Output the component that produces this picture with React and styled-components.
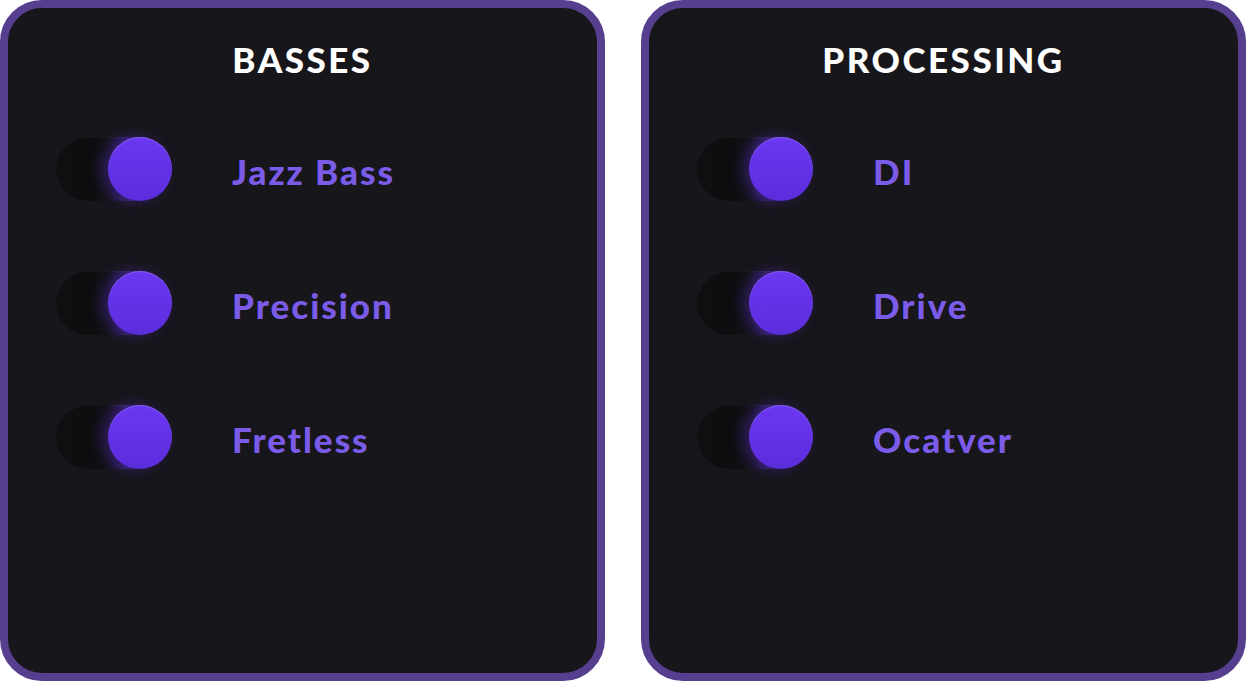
import styled, {createGlobalStyle} from 'styled-components'
import {useState} from "react";

const GlobalStyle = createGlobalStyle`
  body {
    margin: 0;
    background: #ffffff;
    font-family: "Lato", "Noto Sans", sans-serif;
  }
`

const sections = [
    {title: 'BASSES', items: ['Jazz Bass', 'Precision', 'Fretless']},
    {title: 'PROCESSING', items: ['DI', 'Drive', 'Ocatver']},
]

const Toggle = ({on, onClick}) => (
    <Track onClick={onClick} $on={on}>
        <Knob $on={on}/>
    </Track>
)

const Panel = ({title, items}) => {
    const [state, setState] = useState(items.map(() => true))

    const flip = index => setState(s => s.map((v, i) => i === index ? !v : v))

    return (
        <Card>
            <Title>{title}</Title>
            <List>
                {
                    items.map((item, index) =>
                        <Row key={item}>
                            <Toggle on={state[index]} onClick={() => flip(index)}/>
                            <Label>{item}</Label>
                        </Row>
                    )
                }
            </List>
        </Card>
    )
}

const App = () => (
    <>
        <GlobalStyle/>
        <Page>
            {sections.map(s => <Panel key={s.title} title={s.title} items={s.items}/>)}
        </Page>
    </>
)

export default App;


const Page = styled.div`
  display: flex;
  gap: 36px;
  width: 1246px;
`

const Card = styled.div`
  box-sizing: border-box;
  width: 605px;
  height: 681px;
  background: #17161b;
  border: 8px solid #563f8f;
  border-radius: 42px;
  padding: 31px 48px 0;
`

const Title = styled.h2`
  margin: 0;
  text-align: center;
  color: #ffffff;
  font-weight: 900;
  font-size: 35px;
  line-height: 40px;
  letter-spacing: 2.5px;
`

const List = styled.div`
  display: flex;
  flex-direction: column;
  gap: 70px;
  margin-top: 58px;
`

const Row = styled.div`
  display: flex;
  align-items: center;
  gap: 60px;
`

const Track = styled.div`
  position: relative;
  flex: none;
  width: 116px;
  height: 64px;
  border-radius: 32px;
  cursor: pointer;
  background: linear-gradient(90deg, #0f0f11 0%, #0e0e10 30%, #141219 45%, rgba(92, 48, 220, 0.35) 62%, rgba(92, 48, 220, 0.1) 80%, transparent 100%);
  box-shadow: inset 0 1px 0 rgba(255, 255, 255, 0.03);
`

const Knob = styled.div`
  position: absolute;
  top: 0;
  ${props => props.$on ? 'right: 0;' : 'left: 0;'}
  width: 64px;
  height: 64px;
  border-radius: 50%;
  background: linear-gradient(180deg, #6b37f2 0%, #5b2ddb 100%);
  box-shadow: inset 0 1px 1px rgba(255, 255, 255, 0.2), -6px 0 14px rgba(100, 50, 240, 0.35);
`

const Label = styled.span`
  color: #7b5ce9;
  font-weight: 900;
  font-size: 35px;
  line-height: 40px;
  letter-spacing: 2px;
  padding-top: 3px;
`
